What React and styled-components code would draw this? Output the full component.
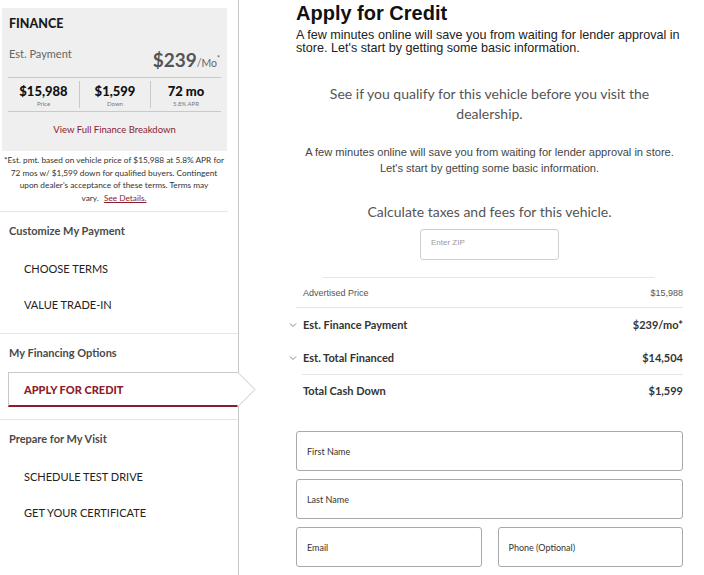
import React from 'react';
import styled, { createGlobalStyle } from 'styled-components';

const GlobalStyle = createGlobalStyle`
  html, body { margin: 0; padding: 0; background: #fff; }
  body { font-family: Lato, "Open Sans", sans-serif; color: #222; }
  * { box-sizing: border-box; }
`;

const RED = '#8b1c2e';

const Page = styled.div`
  display: flex;
  width: 704px;
  height: 575px;
  overflow: hidden;
`;

const Sidebar = styled.aside`
  width: 239px;
  flex-shrink: 0;
  border-right: 1px solid #c8c8c8;
  font-family: Lato, sans-serif;
`;

const FinanceBlock = styled.div`
  width: 228px;
  padding-top: 8px;
  padding-bottom: 7px;
  border-bottom: 1px solid #e6e6e6;
`;

const FinanceBox = styled.div`
  margin-left: 2px;
  width: 225px;
  background: #efefef;
  padding: 8px 6px 0;
`;

const FinanceTitle = styled.div`
  font-weight: 900;
  font-size: 12.5px;
  line-height: 16px;
  padding-left: 1px;
  color: #1a1a1a;
`;

const PaymentRow = styled.div`
  display: flex;
  justify-content: space-between;
  align-items: flex-start;
  height: 46px;
  padding: 15px 1px 0;
  border-bottom: 1px solid #c9c9c9;
`;

const PayLabel = styled.span`
  font-size: 11px;
  line-height: 14px;
  color: #666;
`;

const PayAmount = styled.span`
  font-size: 19px;
  line-height: 22px;
  font-weight: 700;
  color: #555;
  small {
    font-size: 10.5px;
    font-weight: 400;
    color: #666;
  }
  sup {
    font-size: 7px;
    font-weight: 400;
    vertical-align: 6px;
  }
`;

const Stats = styled.div`
  display: grid;
  grid-template-columns: repeat(3, 1fr);
  height: 34px;
  border-bottom: 1px solid #c9c9c9;
`;

const Stat = styled.div`
  display: flex;
  flex-direction: column;
  align-items: center;
  padding-top: 2px;
  margin: 3px 0 4px;
  border-left: ${p => (p.first ? 'none' : '1px solid #c9c9c9')};
  b {
    font-size: 13px;
    line-height: 16px;
    font-weight: 900;
    color: #111;
  }
  span {
    font-size: 6px;
    line-height: 9px;
    color: #777;
  }
`;

const BreakdownLink = styled.div`
  text-align: center;
  font-size: 9.5px;
  line-height: 14px;
  color: ${RED};
  padding: 11px 0 14px;
`;

const Footnote = styled.p`
  margin: 3px 0 0;
  text-align: center;
  font-size: 8.3px;
  line-height: 12.5px;
  color: #333;
  a {
    color: ${RED};
    text-decoration: underline;
    margin-left: 3px;
  }
`;

const Section = styled.div`
  padding-bottom: ${p => p.pb || 11}px;
  border-bottom: ${p => (p.last ? 'none' : '1px solid #e6e6e6')};
`;

const SectionHeader = styled.div`
  font-size: 11px;
  font-weight: 700;
  color: #4a4a4a;
  line-height: 18px;
  padding: 10px 9px;
`;

const NavItem = styled.div`
  height: 36px;
  display: flex;
  align-items: center;
  padding-left: 24px;
  font-size: 11px;
  color: #222;
  text-transform: uppercase;
`;

const ActiveItem = styled.div`
  position: relative;
  margin-left: 8px;
  height: 35px;
  display: flex;
  align-items: center;
  padding-left: 15px;
  border-top: 1px solid #c8c8c8;
  border-left: 1px solid #c8c8c8;
  border-bottom: 2px solid ${RED};
  font-size: 11px;
  font-weight: 900;
  color: ${RED};
  text-transform: uppercase;
`;

const Pointer = styled.svg`
  position: absolute;
  left: 100%;
  top: -1px;
  width: 19px;
  height: 36px;
  overflow: visible;
`;

const Main = styled.main`
  padding-left: 57px;
  width: 444px;
`;

const Col = styled.div`
  width: 387px;
`;

const Heading = styled.h1`
  margin: 2px 0 0;
  font-family: "Liberation Sans", Arial, sans-serif;
  font-size: 20px;
  line-height: 22px;
  font-weight: 700;
  color: #111;
`;

const Lead = styled.p`
  margin: 5px 0 0;
  font-family: "Liberation Sans", Arial, sans-serif;
  font-size: 12.6px;
  line-height: 12.6px;
  color: #222;
`;

const Qualify = styled.p`
  margin: ${p => p.mt}px 0 0;
  padding: 0 12px;
  text-align: center;
  font-family: Lato, sans-serif;
  font-size: 14px;
  line-height: 20px;
  color: #555;
`;

const Small = styled.p`
  margin: 20px -4px 0;
  text-align: center;
  font-family: "Liberation Sans", Arial, sans-serif;
  font-size: 11.1px;
  line-height: 16px;
  color: #444;
`;

const ZipBox = styled.div`
  margin: 7px auto 0;
  width: 139px;
  height: 31px;
  border: 1px solid #cfcfcf;
  border-radius: 3px;
  padding: 8px 10px;
  font-family: "Liberation Sans", Arial, sans-serif;
  font-size: 8px;
  color: #999;
`;

const Summary = styled.div`
  margin: 17px 0 0;
`;

const TopRule = styled.div`
  margin: 0 28px 0 27px;
  border-top: 1px solid #e6e6e6;
`;

const Row = styled.div`
  display: flex;
  align-items: center;
  height: ${p => p.h}px;
  padding-left: ${p => (p.ml ? 1 : 7)}px;
  margin-left: ${p => p.ml || 0}px;
  border-bottom: ${p => (p.line ? '1px solid #e6e6e6' : 'none')};
  font-family: ${p => (p.bold ? 'Lato, sans-serif' : '"Liberation Sans", Arial, sans-serif')};
  font-size: ${p => (p.bold ? 11 : 9)}px;
  font-weight: ${p => (p.bold ? 700 : 400)};
  color: ${p => (p.bold ? '#333' : '#555')};
`;

const RowLabel = styled.span`
  flex: 1;
`;

const Chevron = styled.svg`
  width: 8px;
  height: 6px;
  margin-left: -14px;
  margin-right: 6px;
`;

const Form = styled.div`
  margin-top: 25px;
  display: grid;
  grid-template-columns: 1fr 1fr;
  gap: 8px 16px;
  width: 387px;
`;

const Field = styled.div`
  grid-column: ${p => (p.full ? '1 / -1' : 'auto')};
  height: 40px;
  border: 1px solid #a9a9a9;
  border-radius: 3px;
  display: flex;
  align-items: center;
  padding-left: 10px;
  font-family: Lato, sans-serif;
  font-size: 9px;
  color: #333;
`;

function ChevronDown() {
  return (
    <Chevron viewBox="0 0 8 6">
      <polyline points="1,1.5 4,4.5 7,1.5" fill="none" stroke="#777" strokeWidth="0.9" />
    </Chevron>
  );
}

export default function App() {
  return (
    <>
      <GlobalStyle />
      <Page>
        <Sidebar>
          <FinanceBlock>
            <FinanceBox>
              <FinanceTitle>FINANCE</FinanceTitle>
              <PaymentRow>
                <PayLabel>Est. Payment</PayLabel>
                <PayAmount>$239<small>/Mo</small><sup>*</sup></PayAmount>
              </PaymentRow>
              <Stats>
                <Stat first><b>$15,988</b><span>Price</span></Stat>
                <Stat><b>$1,599</b><span>Down</span></Stat>
                <Stat><b>72 mo</b><span>5.8% APR</span></Stat>
              </Stats>
              <BreakdownLink>View Full Finance Breakdown</BreakdownLink>
            </FinanceBox>
            <Footnote>
              *Est. pmt. based on vehicle price of $15,988 at 5.8% APR for<br />
              72 mos w/ $1,599 down for qualified buyers. Contingent<br />
              upon dealer's acceptance of these terms. Terms may<br />
              vary. <a>See Details.</a>
            </Footnote>
          </FinanceBlock>

          <Section>
            <SectionHeader>Customize My Payment</SectionHeader>
            <NavItem>Choose Terms</NavItem>
            <NavItem>Value Trade-In</NavItem>
          </Section>

          <Section pb={12}>
            <SectionHeader>My Financing Options</SectionHeader>
            <ActiveItem>
              Apply for Credit
              <Pointer viewBox="0 0 19 36">
                <polygon points="-0.5,0 17,17.5 -0.5,35" fill="#fff" />
                <polyline points="0,0.5 17,17.5 0,34.5" fill="none" stroke="#c8c8c8" strokeWidth="1" />
              </Pointer>
            </ActiveItem>
          </Section>

          <Section last>
            <SectionHeader>Prepare for My Visit</SectionHeader>
            <NavItem>Schedule Test Drive</NavItem>
            <NavItem>Get Your Certificate</NavItem>
          </Section>
        </Sidebar>

        <Main>
          <Col>
            <Heading>Apply for Credit</Heading>
            <Lead>
              A few minutes online will save you from waiting for lender approval in store. Let's start by getting some basic information.
            </Lead>
            <Qualify mt={30}>
              See if you qualify for this vehicle before you visit the dealership.
            </Qualify>
            <Small>
              A few minutes online will save you from waiting for lender approval in store.<br />
              Let's start by getting some basic information.
            </Small>
            <Qualify mt={26}>Calculate taxes and fees for this vehicle.</Qualify>
            <ZipBox>Enter ZIP</ZipBox>

            <Summary>
              <TopRule />
              <Row h={30} line>
                <RowLabel>Advertised Price</RowLabel>
                <span>$15,988</span>
              </Row>
              <Row h={33} bold>
                <ChevronDown />
                <RowLabel>Est. Finance Payment</RowLabel>
                <span>$239/mo*</span>
              </Row>
              <Row h={34} bold line ml={6}>
                <ChevronDown />
                <RowLabel>Est. Total Financed</RowLabel>
                <span>$14,504</span>
              </Row>
              <Row h={31} bold>
                <RowLabel>Total Cash Down</RowLabel>
                <span>$1,599</span>
              </Row>
            </Summary>

            <Form>
              <Field full>First Name</Field>
              <Field full>Last Name</Field>
              <Field>Email</Field>
              <Field>Phone (Optional)</Field>
            </Form>
          </Col>
        </Main>
      </Page>
    </>
  );
}
